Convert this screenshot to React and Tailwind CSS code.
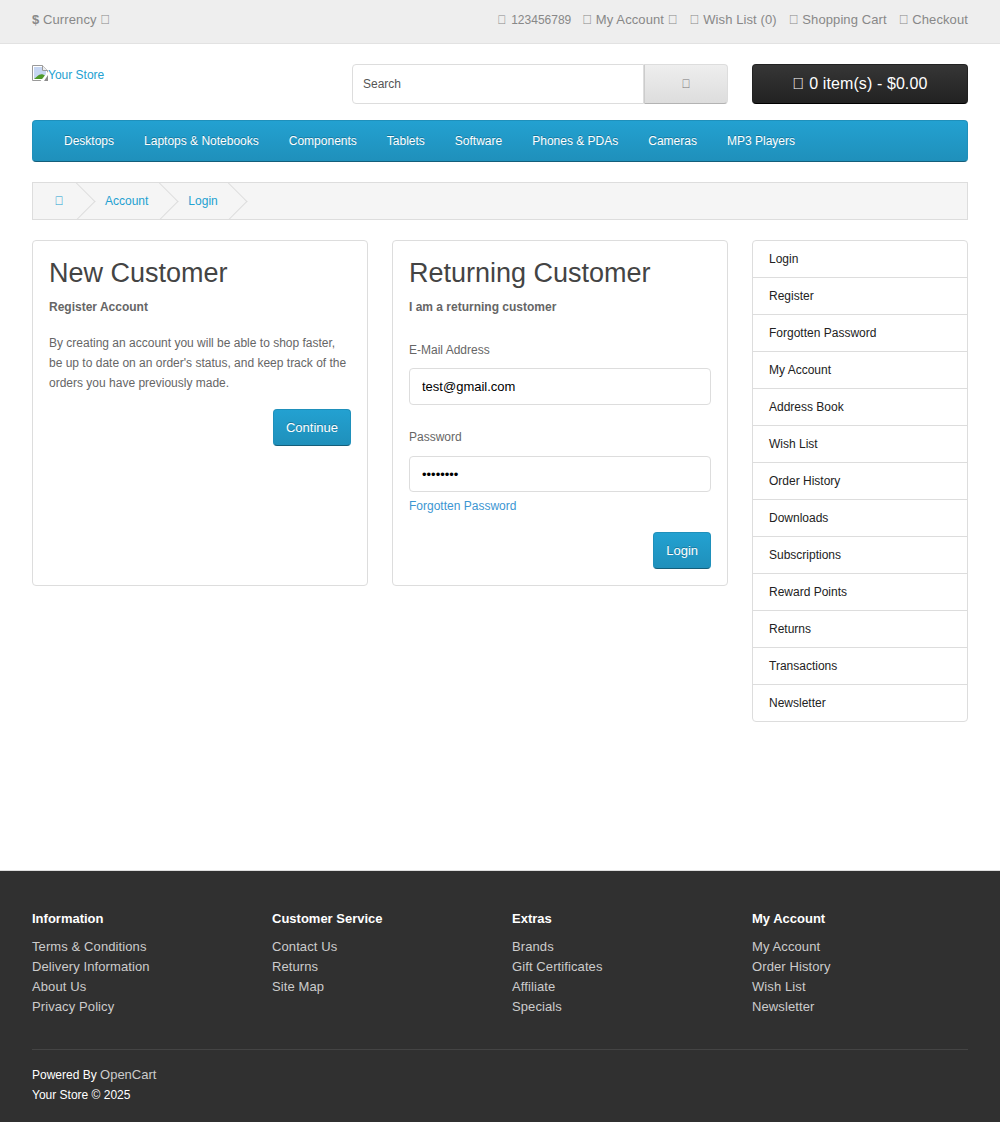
import React from 'react';

const font = "[font-family:'Liberation_Sans',Arial,sans-serif]";

const menu = ['Desktops', 'Laptops & Notebooks', 'Components', 'Tablets', 'Software', 'Phones & PDAs', 'Cameras', 'MP3 Players'];
const sideLinks = ['Login', 'Register', 'Forgotten Password', 'My Account', 'Address Book', 'Wish List', 'Order History', 'Downloads', 'Subscriptions', 'Reward Points', 'Returns', 'Transactions', 'Newsletter'];
const footerCols = [
  { title: 'Information', links: ['Terms & Conditions', 'Delivery Information', 'About Us', 'Privacy Policy'] },
  { title: 'Customer Service', links: ['Contact Us', 'Returns', 'Site Map'] },
  { title: 'Extras', links: ['Brands', 'Gift Certificates', 'Affiliate', 'Specials'] },
  { title: 'My Account', links: ['My Account', 'Order History', 'Wish List', 'Newsletter'] },
];

// the icon font never loaded in the screenshot, so these show as empty boxes
const Icon = () => <span>{'\uf0d7'}</span>;

const BrokenImage = () => (
  <svg width="16" height="16" viewBox="0 0 16 16" className="shrink-0">
    <path d="M0.5 0.5H10.5L15.5 5.5V15.5H0.5Z" fill="#fff" stroke="#9a9a9a" />
    <path d="M2 2H10V6H14V14H2Z" fill="#c6d6f2" />
    <path d="M2 14L5 11.5C7 9.5 9 9 11 9.5L14 11V14Z" fill="#4f9a2c" />
    <path d="M10.5 0.5V5.5H15.5" fill="#eee" stroke="#9a9a9a" />
    <path d="M16 6.5L8.5 16H16Z" fill="#fff" />
    <path d="M16 10L12 16H16Z" fill="#8c8c8c" />
  </svg>
);

const Crumb = ({ children }) => (
  <li className="relative px-5">
    <a href="#" className="text-[#23a1d1]">{children}</a>
    <span className="absolute top-[-3.5px] right-[-4.5px] w-[27px] h-[27px] rotate-45 border-t border-r border-[#ddd]"></span>
  </li>
);

const BlueButton = ({ children }) => (
  <button className="h-[37px] px-3 rounded bg-gradient-to-b from-[#23a1d1] to-[#1f90bb] border border-[#1f90bb] border-b-[#145e7a] text-white text-[13px] [text-shadow:0_-1px_0_rgba(0,0,0,0.25)]">
    {children}
  </button>
);

export default function App() {
  return (
    <div className={`${font} bg-white text-xs text-[#666] leading-5`}>
      {/* top bar */}
      <nav className="h-11 bg-[#eee] border-b border-[#e2e2e2] px-8 flex items-center justify-between text-[#888] text-[13px] tracking-[0.1px] pb-1">
        <div><b className="font-bold">$</b> Currency <Icon /></div>
        <ul className="flex gap-3">
          <li className="text-xs leading-5 tracking-normal flex items-center gap-[5px] -mr-px"><Icon /> 123456789</li>
          <li><Icon /> My Account <Icon /></li>
          <li><Icon /> Wish List (0)</li>
          <li><Icon /> Shopping Cart</li>
          <li><Icon /> Checkout</li>
        </ul>
      </nav>

      <div className="px-8">
        {/* header */}
        <header className="flex pt-5 pb-4">
          <a href="#" className="w-[320px] flex items-start text-[#23a1d1] leading-5 pt-px">
            <BrokenImage /><span>Your Store</span>
          </a>
          <div className="w-[376px] h-10 flex">
            <input readOnly placeholder="Search" className="flex-1 min-w-0 h-10 px-[10px] border border-[#ddd] rounded-l bg-white text-xs text-[#555] placeholder:text-[#555] outline-none" />
            <button className="w-[84px] h-10 rounded-r bg-gradient-to-b from-[#eee] to-[#ddd] border border-[#ddd] border-b-[#b3b3b3] border-l-[#ccc] text-[#777]"><Icon /></button>
          </div>
          <button className="ml-6 w-[216px] h-10 rounded bg-gradient-to-b from-[#363636] to-[#222] border border-[#222] border-b-black text-white text-base tracking-[0.1px]"><Icon /> 0 item(s) - $0.00</button>
        </header>

        {/* main menu */}
        <nav className="h-[42px] rounded bg-gradient-to-b from-[#23a1d1] to-[#1f90bb] border border-[#1f90bb] border-b-[#145e7a] flex items-center pl-4 mb-5">
          {menu.map((item) => (
            <a key={item} href="#" className="px-[15px] text-white text-xs [text-shadow:0_-1px_0_rgba(0,0,0,0.25)]">{item}</a>
          ))}
        </nav>

        {/* breadcrumb */}
        <ul className="h-[38px] bg-[#f5f5f5] border border-[#ddd] flex items-center overflow-hidden mb-5">
          <Crumb><span className="inline-block w-3 text-center"><Icon /></span></Crumb>
          <Crumb>Account</Crumb>
          <Crumb>Login</Crumb>
        </ul>

        <div className="flex items-start gap-6">
          <div className="w-[696px] grid grid-cols-2 gap-6">
            <section className="border border-[#ddd] rounded p-4">
              <h2 className="text-[27px] leading-[30px] text-[#444] mb-[9px] mt-[1px]">New Customer</h2>
              <p className="font-bold mb-4">Register Account</p>
              <p className="mb-4">By creating an account you will be able to shop faster, be up to date on an order's status, and keep track of the orders you have previously made.</p>
              <div className="flex justify-end"><BlueButton>Continue</BlueButton></div>
            </section>
            <section className="border border-[#ddd] rounded p-4">
              <h2 className="text-[27px] leading-[30px] text-[#444] mb-[9px] mt-[1px]">Returning Customer</h2>
              <p className="font-bold mb-[23px]">I am a returning customer</p>
              <label className="block mb-2">E-Mail Address</label>
              <input readOnly value="test@gmail.com" className="block w-full h-[37px] px-3 border border-[#ddd] rounded text-[13px] text-black outline-none mb-[22px]" />
              <label className="block mb-[9px]">Password</label>
              <input readOnly type="password" value="password" className="block w-full h-[36px] px-3 border border-[#ddd] rounded text-[13px] text-black outline-none" />
              <a href="#" className="block text-[#3c96d2] mt-1 mb-4">Forgotten Password</a>
              <div className="flex justify-end"><BlueButton>Login</BlueButton></div>
            </section>
          </div>

          <aside className="w-[216px] border border-[#ddd] rounded">
            {sideLinks.map((link, i) => (
              <a key={link} href="#" className={`block px-4 py-2 text-[#222] ${i < sideLinks.length - 1 ? 'h-[37px] border-b border-[#ddd]' : 'h-9'}`}>{link}</a>
            ))}
          </aside>
        </div>
      </div>

      {/* footer */}
      <footer className="mt-[148px] h-[252px] bg-[#303030] border-t border-[#ddd] px-8 pt-[38px] text-[13px] text-[#ccc]">
        <div className="grid grid-cols-4 w-[960px]">
          {footerCols.map((col) => (
            <div key={col.title}>
              <h5 className="font-bold text-white mb-2">{col.title}</h5>
              <ul className="tracking-[0.1px]">
                {col.links.map((l) => <li key={l}><a href="#">{l}</a></li>)}
              </ul>
            </div>
          ))}
        </div>
        <hr className="border-[#444] mt-8 mb-[15px]" />
        <p className="text-white text-xs leading-5">Powered By <a href="#" className="text-[#ccc] text-[13px]">OpenCart</a></p>
        <p className="text-white text-xs leading-5">Your Store © 2025</p>
      </footer>
    </div>
  );
}
